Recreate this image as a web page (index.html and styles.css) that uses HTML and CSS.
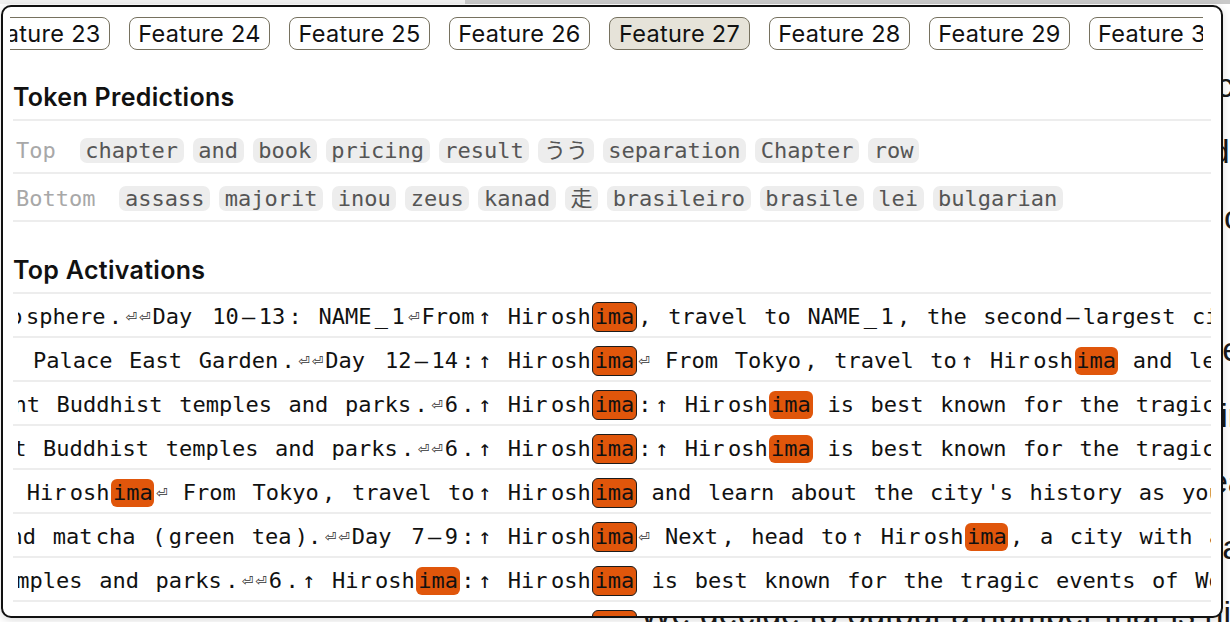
FILE: index.html
```html
<!DOCTYPE html>
<html lang="en">
<head>
<meta charset="utf-8">
<title>Feature 27</title>
<link rel="stylesheet" href="styles.css">
</head>
<body>
<div class="page">
  <div class="page-scroll"><div class="page-thumb"></div></div>
  <div class="article">
    <p>The model learns to represent the structure of the input text</p>
    <p>and uses these representations to predict the next token in a</p>
    <p>sequence; features often fire on specific parts of words</p>
    <p>and on recurring patterns across many different contexts</p>
    <p>such as place names, dates and numbered lists of items</p>
    <p>which appear in travel itineraries and similar documents</p>
    <p>where the same proper nouns are repeated many times over</p>
    <p>the course of a single passage of text, as shown here</p>
    <p>We decide to output a number that is nine places</p>
  </div>
</div>

<div class="window">
  <div class="tabs">
    <div class="tab-track">
      <button class="tab">Feature 23</button>
      <button class="tab">Feature 24</button>
      <button class="tab">Feature 25</button>
      <button class="tab">Feature 26</button>
      <button class="tab active">Feature 27</button>
      <button class="tab">Feature 28</button>
      <button class="tab">Feature 29</button>
      <button class="tab">Feature 30</button>
      <button class="tab">Feature 31</button>
    </div>
  </div>

  <h2 class="section-title first">Token Predictions</h2>
  <div class="pred-row top-row">
    <span class="pred-label">Top</span>
    <div class="chips">
      <span class="chip">chapter</span><span class="chip">and</span><span class="chip">book</span><span class="chip">pricing</span><span class="chip">result</span><span class="chip">うう</span><span class="chip">separation</span><span class="chip">Chapter</span><span class="chip">row</span>
    </div>
  </div>
  <div class="pred-row">
    <span class="pred-label">Bottom</span>
    <div class="chips">
      <span class="chip">assass</span><span class="chip">majorit</span><span class="chip">inou</span><span class="chip">zeus</span><span class="chip">kanad</span><span class="chip">走</span><span class="chip">brasileiro</span><span class="chip">brasile</span><span class="chip">lei</span><span class="chip">bulgarian</span>
    </div>
  </div>

  <h2 class="section-title">Top Activations</h2>
  <div class="activations">
    <div class="act-row">
      <div class="ctx-left"><span class="t">atmo</span><span class="t">sphere</span><span class="t">.</span><span class="t nl">⏎</span><span class="t nl">⏎</span><span class="t">Day</span><span class="t"> </span><span class="t">10</span><span class="t">–</span><span class="t">13</span><span class="t">:</span><span class="t"> NAME</span><span class="t">_</span><span class="t">1</span><span class="t nl">⏎</span><span class="t">From</span><span class="t">↑</span><span class="t"> Hir</span><span class="t">osh</span></div>
      <span class="t hl key">ima</span>
      <div class="ctx-right"><span class="t">,</span><span class="t"> travel</span><span class="t"> to</span><span class="t"> NAME</span><span class="t">_</span><span class="t">1</span><span class="t">,</span><span class="t"> the</span><span class="t"> second</span><span class="t">–</span><span class="t">largest</span><span class="t"> city</span><span class="t"> in</span></div>
    </div>
    <div class="act-row">
      <div class="ctx-left"><span class="t">Imperial</span><span class="t"> Palace</span><span class="t"> East</span><span class="t"> Garden</span><span class="t">.</span><span class="t nl">⏎</span><span class="t nl">⏎</span><span class="t">Day</span><span class="t"> </span><span class="t">12</span><span class="t">–</span><span class="t">14</span><span class="t">:</span><span class="t">↑</span><span class="t"> Hir</span><span class="t">osh</span></div>
      <span class="t hl key">ima</span>
      <div class="ctx-right"><span class="t nl">⏎</span><span class="t"> From</span><span class="t"> Tokyo</span><span class="t">,</span><span class="t"> travel</span><span class="t"> to</span><span class="t">↑</span><span class="t"> Hir</span><span class="t">osh</span><span class="t hl">ima</span><span class="t"> and</span><span class="t"> learn</span><span class="t"> about</span></div>
    </div>
    <div class="act-row">
      <div class="ctx-left"><span class="t"> ancient</span><span class="t"> Buddhist</span><span class="t"> temples</span><span class="t"> and</span><span class="t"> parks</span><span class="t">.</span><span class="t nl">⏎</span><span class="t">6</span><span class="t">.</span><span class="t">↑</span><span class="t"> Hir</span><span class="t">osh</span></div>
      <span class="t hl key">ima</span>
      <div class="ctx-right"><span class="t">:</span><span class="t">↑</span><span class="t"> Hir</span><span class="t">osh</span><span class="t hl">ima</span><span class="t"> is</span><span class="t"> best</span><span class="t"> known</span><span class="t"> for</span><span class="t"> the</span><span class="t"> tragic</span><span class="t"> events</span></div>
    </div>
    <div class="act-row">
      <div class="ctx-left"><span class="t"> ancient</span><span class="t"> Buddhist</span><span class="t"> temples</span><span class="t"> and</span><span class="t"> parks</span><span class="t">.</span><span class="t nl">⏎</span><span class="t nl">⏎</span><span class="t">6</span><span class="t">.</span><span class="t">↑</span><span class="t"> Hir</span><span class="t">osh</span></div>
      <span class="t hl key">ima</span>
      <div class="ctx-right"><span class="t">:</span><span class="t">↑</span><span class="t"> Hir</span><span class="t">osh</span><span class="t hl">ima</span><span class="t"> is</span><span class="t"> best</span><span class="t"> known</span><span class="t"> for</span><span class="t"> the</span><span class="t"> tragic</span><span class="t"> events</span></div>
    </div>
    <div class="act-row">
      <div class="ctx-left"><span class="t">↑</span><span class="t"> Hir</span><span class="t">osh</span><span class="t hl">ima</span><span class="t nl">⏎</span><span class="t"> From</span><span class="t"> Tokyo</span><span class="t">,</span><span class="t"> travel</span><span class="t"> to</span><span class="t">↑</span><span class="t"> Hir</span><span class="t">osh</span></div>
      <span class="t hl key">ima</span>
      <div class="ctx-right"><span class="t"> and</span><span class="t"> learn</span><span class="t"> about</span><span class="t"> the</span><span class="t"> city</span><span class="t">'s</span><span class="t"> history</span><span class="t"> as</span><span class="t"> you</span></div>
    </div>
    <div class="act-row">
      <div class="ctx-left"><span class="t"> sushi</span><span class="t"> and</span><span class="t"> mat</span><span class="t">cha</span><span class="t"> (</span><span class="t">green</span><span class="t"> tea</span><span class="t">).</span><span class="t nl">⏎</span><span class="t nl">⏎</span><span class="t">Day</span><span class="t"> </span><span class="t">7</span><span class="t">–</span><span class="t">9</span><span class="t">:</span><span class="t">↑</span><span class="t"> Hir</span><span class="t">osh</span></div>
      <span class="t hl key">ima</span>
      <div class="ctx-right"><span class="t nl">⏎</span><span class="t"> Next</span><span class="t">,</span><span class="t"> head</span><span class="t"> to</span><span class="t">↑</span><span class="t"> Hir</span><span class="t">osh</span><span class="t hl">ima</span><span class="t">,</span><span class="t"> a</span><span class="t"> city</span><span class="t"> with</span><span class="t"> a</span></div>
    </div>
    <div class="act-row">
      <div class="ctx-left"><span class="t"> temples</span><span class="t"> and</span><span class="t"> parks</span><span class="t">.</span><span class="t nl">⏎</span><span class="t nl">⏎</span><span class="t">6</span><span class="t">.</span><span class="t">↑</span><span class="t"> Hir</span><span class="t">osh</span><span class="t hl">ima</span><span class="t">:</span><span class="t">↑</span><span class="t"> Hir</span><span class="t">osh</span></div>
      <span class="t hl key">ima</span>
      <div class="ctx-right"><span class="t"> is</span><span class="t"> best</span><span class="t"> known</span><span class="t"> for</span><span class="t"> the</span><span class="t"> tragic</span><span class="t"> events</span><span class="t"> of</span><span class="t"> World</span><span class="t"> War</span></div>
    </div>
    <div class="act-row">
      <div class="ctx-left"><span class="t">We</span><span class="t"> decided</span><span class="t"> to</span><span class="t"> visit</span><span class="t"> the</span><span class="t"> city</span><span class="t"> of</span><span class="t">↑</span><span class="t"> Hir</span><span class="t">osh</span></div>
      <span class="t hl key">ima</span>
      <div class="ctx-right"><span class="t"> to</span><span class="t"> learn</span><span class="t"> about</span><span class="t"> its</span><span class="t"> history</span><span class="t"> and</span></div>
    </div>
  </div>
</div>
</body>
</html>
```

FILE: styles.css
```css
* { box-sizing: border-box; }

html, body {
  margin: 0;
  padding: 0;
  width: 1230px;
  height: 622px;
  overflow: hidden;
  background: #ffffff;
  font-family: "Inter", "Liberation Sans", sans-serif;
  color: #111;
}

/* background page behind the overlay */
.page {
  width: 1230px;
  height: 622px;
  overflow: hidden;
}
.page-scroll {
  height: 4px;
  background: #f1f1f1;
  display: flex;
}
.page-thumb {
  margin-left: 465px;
  flex: 1;
  background: #c9c9c9;
}
.article {
  padding: 48px 0 0 640px;
  width: 1900px;
  font-family: "Liberation Sans", sans-serif;
  font-size: 34px;
  line-height: 66px;
  color: #1a1a1a;
}
.article p { margin: 0; white-space: nowrap; }

/* overlay window */
.window {
  position: absolute;
  left: 1px;
  top: 5px;
  width: 1222px;
  height: 613px;
  border: 2px solid #111;
  border-radius: 10px;
  background: #fff;
  overflow: hidden;
  padding: 0 10px;
  box-shadow: 0 2px 8px rgba(0, 0, 0, 0.15);
}

.tabs {
  margin: 10px 8px 0 -3px;
  overflow: hidden;
}
.tab-track {
  display: flex;
  gap: 19px;
  margin-left: -41px;
}
.tab {
  flex-shrink: 0;
  width: 141px;
  height: 33px;
  padding: 0;
  border: 1.5px solid #76715f;
  border-radius: 8px;
  background: #fff;
  font-family: "Inter", "Liberation Sans", sans-serif;
  font-size: 23.5px;
  letter-spacing: 0.3px;
  line-height: 30px;
  color: #111;
  text-align: center;
}
.tab.active { background: #e6e3d9; }

.section-title {
  margin: 33px 0 0;
  padding: 0 0 7px;
  font-size: 25px;
  letter-spacing: 0.3px;
  line-height: 30px;
  font-weight: 600;
  color: #111;
  border-bottom: 2px solid #ededed;
}
.section-title.first { margin-top: 32px; }

.pred-row {
  display: flex;
  align-items: center;
  padding: 12px 0 9px 3px;
  border-bottom: 2px solid #ededed;
  font-family: "DejaVu Sans Mono", "Noto Sans CJK JP", monospace;
  font-size: 22px;
}
.pred-row.top-row { margin-top: 5px; }
.pred-label {
  color: #a8a8a8;
  line-height: 25px;
  margin-right: 24px;
}
.chips {
  display: flex;
  gap: 9px;
}
.chip {
  background: #ededed;
  color: #555;
  border-radius: 7px;
  padding: 0 5.6px;
  line-height: 25px;
  white-space: pre;
}

.activations {
  font-family: "DejaVu Sans Mono", "DejaVu Sans", monospace;
  font-size: 22px;
  color: #111;
}
.act-row {
  display: flex;
  align-items: center;
  height: 44px;
  padding: 3px 0 0 5px;
  border-bottom: 2px solid #ededed;
  overflow: hidden;
}
.ctx-left {
  flex: 1 1 0;
  min-width: 0;
  display: flex;
  justify-content: flex-end;
  align-items: center;
  overflow: hidden;
}
.ctx-right {
  flex: 1 1 0;
  min-width: 0;
  display: flex;
  align-items: center;
  overflow: hidden;
}
.t {
  flex-shrink: 0;
  white-space: pre;
  padding: 0 1.7px;
  line-height: 28px;
  border-radius: 6px;
}
.t.nl {
  font-family: "DejaVu Sans", sans-serif;
  font-size: 14px;
  color: #333;
  width: 13.5px;
  text-align: center;
}
.t.hl { background: #e0560b; }
.t.key {
  border: 1.5px solid #1b1b1b;
  padding: 0 1.3px;
}
```
